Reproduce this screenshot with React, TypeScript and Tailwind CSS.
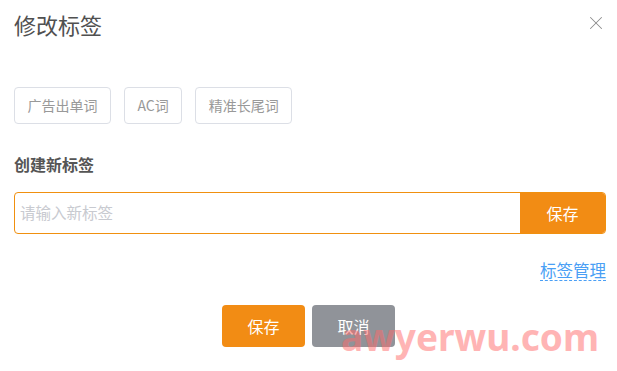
import { X } from "lucide-react";

const cjk = { fontFamily: '"Noto Sans CJK SC", "Noto Sans", sans-serif' };

const tags = ["广告出单词", "AC词", "精准长尾词"];

export default function App() {
  return (
    <div className="relative h-[371px] w-[617px] overflow-hidden bg-white" style={cjk}>
      <header className="flex items-center justify-between pl-[14px] pr-[10px] pt-[12px]">
        <h1 className="text-[22px] leading-[24px] text-[#505050]">修改标签</h1>
        <X className="-mt-[3px] h-[22px] w-[22px] text-[#8c8c8c]" strokeWidth={1.1} />
      </header>

      <div className="mt-[51px] flex gap-[13px] px-[14px]">
        {tags.map(tag => (
          <span
            key={tag}
            className="flex h-[37px] items-center rounded-[4px] border border-[#dcdfe6] px-[12.5px] text-[14px] text-[#999999]"
          >
            {tag}
          </span>
        ))}
      </div>

      <h2 className="mt-[30px] px-[14px] text-[16px] font-bold leading-[20px] text-[#555555]">创建新标签</h2>

      <div className="ml-[14px] mr-[11px] mt-[18px] flex h-[42px] rounded-[4px] border border-[#f0900f]">
        <input
          className="min-w-0 flex-1 bg-transparent pl-[5px] text-[15.5px] outline-none placeholder:text-[#c8cad0]"
          placeholder="请输入新标签"
        />
        <button className="w-[85px] rounded-r-[3px] bg-[#f28c14] text-[16px] text-white">保存</button>
      </div>

      <div className="mt-[26px] flex justify-end px-[11px]">
        <a className="border-b border-dashed border-[#4a9ff5] text-[16.5px] leading-[20px] text-[#4a9ff5]">标签管理</a>
      </div>

      <div className="mt-[24px] flex justify-center gap-[7px]">
        <button className="h-[42px] w-[83px] rounded-[4px] bg-[#f28c14] text-[16px] text-white">保存</button>
        <button className="h-[42px] w-[83px] rounded-[4px] bg-[#909399] text-[16px] text-white">取消</button>
      </div>

      <span
        className="pointer-events-none absolute left-[341px] top-[318px] text-[37px] font-bold leading-none text-[#ff6b6b] opacity-50"
        style={{ fontFamily: '"Noto Sans", sans-serif' }}
      >
        awyerwu.com
      </span>
    </div>
  );
}
